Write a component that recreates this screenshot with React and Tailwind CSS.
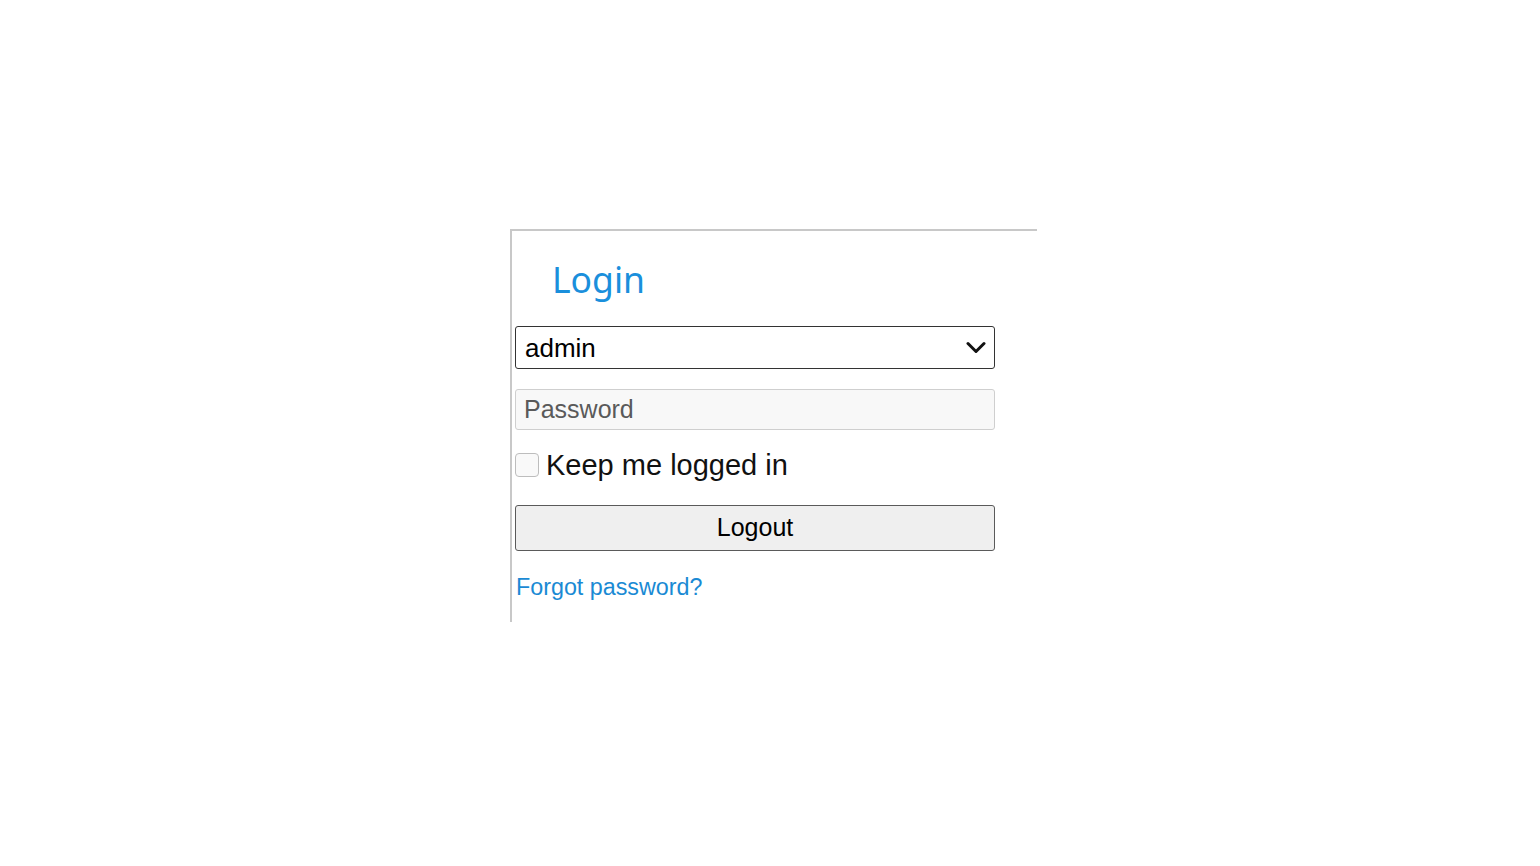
export default function App() {
  return (
    <div className="min-h-screen bg-white" style={{ fontFamily: '"Liberation Sans", Arial, sans-serif' }}>
      <div className="pt-[229px] pl-[510px]">
        {/* login panel */}
        <div className="w-[527px] h-[393px] border-t-2 border-l-2 border-[#c8c8c8]">
          <h1
            className="pt-[28px] pl-[40px] text-[35.5px] leading-[40px] text-[#1a8fdc] font-normal"
            style={{ fontFamily: '"Noto Sans", "Open Sans", sans-serif' }}
          >
            Login
          </h1>

          <div className="pl-[3px] w-[483px]">
            {/* user select */}
            <div className="mt-[27px] h-[43px] flex items-center justify-between border-[1.5px] border-[#333] rounded-[3px] bg-white pl-[9px] pr-[8px]">
              <span className="text-[26px] text-black leading-none">admin</span>
              <svg width="20" height="13" viewBox="0 0 20 13" fill="none">
                <polyline points="2,2.5 10,10.5 18,2.5" stroke="#111" strokeWidth="3" strokeLinecap="round" strokeLinejoin="round" />
              </svg>
            </div>

            {/* password */}
            <input
              type="password"
              placeholder="Password"
              className="mt-[20px] block w-full h-[41px] border border-[#cfcfcf] rounded-[3px] bg-[#f8f8f8] pl-[8px] text-[25px] placeholder:text-[#5a5a5a] outline-none"
            />

            {/* keep logged in */}
            <label className="mt-[18px] flex items-center gap-[7px] h-[34px]">
              <span className="w-[24px] h-[24px] border border-[#bdbdbd] rounded-[4px] bg-[#f9f9f9]" />
              <span className="text-[29px] leading-none text-[#111]">Keep me logged in</span>
            </label>

            {/* logout */}
            <button className="mt-[23px] w-full h-[46px] bg-[#efefef] border-[1.5px] border-[#5a5a5a] rounded-[3px] text-[25px] text-black">
              Logout
            </button>

            <div className="mt-[22px] pl-[1px]">
              <a href="#" className="text-[23.3px] leading-[28px] text-[#1a8ad4]">Forgot password?</a>
            </div>
          </div>
        </div>
      </div>
    </div>
  )
}
